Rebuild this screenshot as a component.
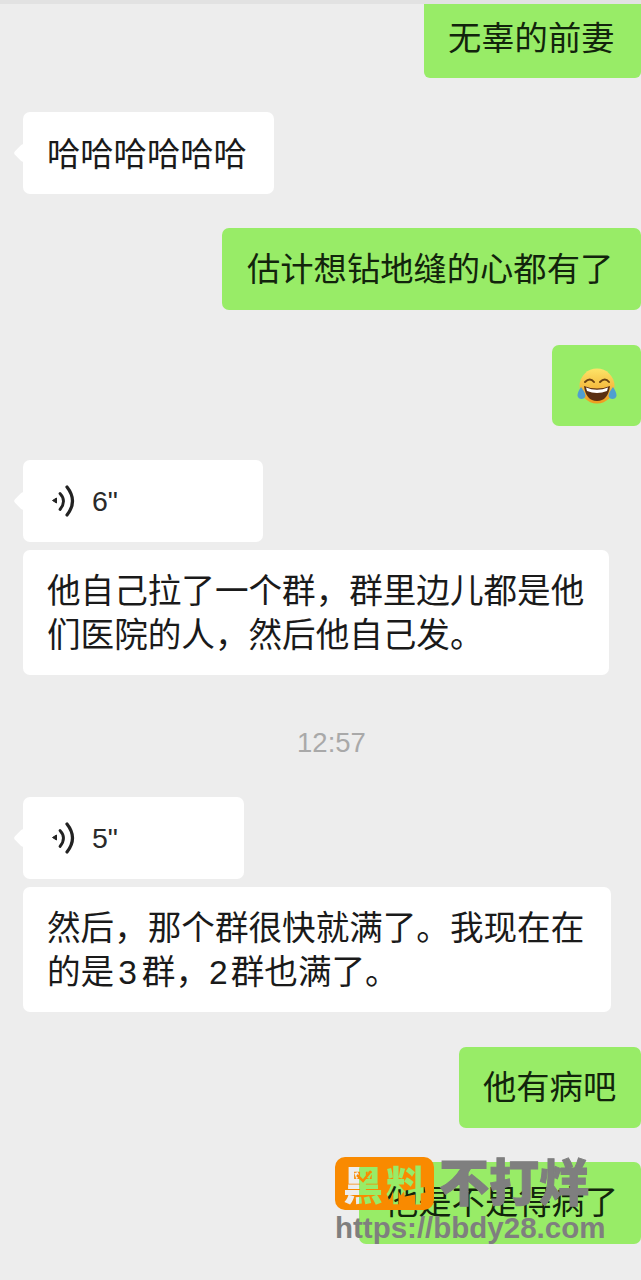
<div class="chat">
	<div class="row me first"><div class="bubble green b1">无辜的前妻</div></div>
	<div class="row other haha"><div class="bubble white tail b2">哈哈哈哈哈哈</div></div>
	<div class="row me guess"><div class="bubble green b3">估计想钻地缝的心都有了</div></div>
	<div class="row me emoji-row">
		<div class="bubble green emoji">
			<svg width="42" height="40" viewBox="0 0 42 40" aria-hidden="true">
				<defs>
					<linearGradient id="skin" x1="0" y1="0" x2="0" y2="1">
						<stop offset="0" stop-color="#fde468" />
						<stop offset="1" stop-color="#ee9a1e" />
					</linearGradient>
				</defs>
				<circle cx="21" cy="20" r="17.5" fill="url(#skin)" />
				<path d="M9 16 q5 -5 9 0 M24 16 q5 -5 9 0" fill="none" stroke="#6b4312" stroke-width="2" stroke-linecap="round" />
				<path d="M8 20 Q21 25 34 20 Q32 35 21 35 Q10 35 8 20 Z" fill="#5a2f12" />
				<path d="M10 21.5 Q21 26 32 21.5 L31 25 Q21 29 11 25 Z" fill="#fff" />
				<path d="M5 21 Q1 27 1.5 30 a4.2 4.2 0 0 0 8 0 Q9 26 5 21 Z" fill="#4f9fd0" />
				<path d="M37 21 Q41 27 40.5 30 a4.2 4.2 0 0 1 -8 0 Q33 26 37 21 Z" fill="#4f9fd0" />
			</svg>
		</div>
	</div>
	<div class="row other voice-six"><div class="bubble white tail voice v6">
		<svg width="25" height="32" viewBox="0 0 25 32" aria-hidden="true">
			<path d="M2.5 15.5 L6.5 13 V18 Z" fill="#222" stroke="#222" stroke-linejoin="round" />
			<path d="M10 8.5 Q17 16 10 24.5" fill="none" stroke="#222" stroke-width="2.8" stroke-linecap="round" />
			<path d="M17 2 Q28 16 17 30" fill="none" stroke="#222" stroke-width="3.2" stroke-linecap="round" />
		</svg>
		<span class="secs">6"</span>
	</div></div>
	<div class="row other stacked"><div class="bubble white long l1">他自己拉了一个群，群里边儿都是他们医院的人，然后他自己发。</div></div>
	<div class="time">12:57</div>
	<div class="row other voice-five"><div class="bubble white tail voice v5">
		<svg width="25" height="32" viewBox="0 0 25 32" aria-hidden="true">
			<path d="M2.5 15.5 L6.5 13 V18 Z" fill="#222" stroke="#222" stroke-linejoin="round" />
			<path d="M10 8.5 Q17 16 10 24.5" fill="none" stroke="#222" stroke-width="2.8" stroke-linecap="round" />
			<path d="M17 2 Q28 16 17 30" fill="none" stroke="#222" stroke-width="3.2" stroke-linecap="round" />
		</svg>
		<span class="secs">5"</span>
	</div></div>
	<div class="row other stacked"><div class="bubble white long l2">然后，那个群很快就满了。我现在在的是<span class="three">3</span>群，<span class="two">2</span>群也满了。</div></div>
	<div class="row me sick"><div class="bubble green b4">他有病吧</div></div>
	<div class="row me last"><div class="bubble green b5">他是不是得病了</div></div>

	<div class="mark">
		<div class="mark-top">
			<svg class="badge" width="99" height="53" viewBox="0 0 99 53" role="img">
				<mask id="cut">
					<rect width="99" height="53" fill="#fff" />
					<text class="badge-text" x="8" y="43" fill="#000">黑</text>
					<text class="badge-text" x="51" y="43" fill="#000">料</text>
				</mask>
				<rect width="99" height="53" rx="10" fill="#f98a00" mask="url(#cut)" />
				<path d="M22 18 L28 24 L36 14" fill="none" stroke="#f98a00" stroke-width="2.5" />
			</svg>
			<span class="slogan">不打烊</span>
		</div>
		<div class="url">https://bbdy28.com</div>
	</div>
</div>

<style>
	:global(body) {
		margin: 0;
		background: #ededed;
	}

	.chat {
		position: relative;
		width: 641px;
		height: 1280px;
		overflow: hidden;
		box-sizing: border-box;
		background: #ededed;
		border-top: 4px solid #e2e2e2;
		font-family: "Liberation Sans", "Noto Sans CJK SC", sans-serif;
		color: #1a1a1a;
	}

	.row {
		display: flex;
	}

	.me {
		justify-content: flex-end;
	}

	.other {
		padding-left: 23px;
	}

	.bubble {
		position: relative;
		box-sizing: border-box;
		border-radius: 7px;
		font-size: 33.3px;
		line-height: 44px;
		padding: 0 24px;
		height: 81px;
		display: flex;
		align-items: center;
		white-space: nowrap;
	}

	.green {
		background: #98ec67;
		color: #12240c;
	}

	.white {
		background: #fff;
	}

	.tail::before {
		content: "";
		position: absolute;
		left: -7px;
		top: 50%;
		width: 14px;
		height: 14px;
		margin-top: -7px;
		background: #fff;
		border-radius: 3px;
		transform: rotate(45deg);
	}

	.b1 {
		height: 74px;
		width: 217px;
		padding-bottom: 4px;
		border-radius: 0 0 6px 6px;
	}

	.haha {
		margin-top: 34px;
	}

	.b2 {
		width: 251px;
		height: 82px;
		padding-top: 4px;
	}

	.guess {
		margin-top: 34px;
	}

	.b3 {
		width: 419px;
		height: 82px;
		padding-top: 2px;
		padding-left: 25px;
	}

	.emoji-row {
		margin-top: 35px;
	}

	.emoji {
		width: 89px;
		padding: 0 0 0 24px;
	}

	.voice-six {
		margin-top: 34px;
	}

	.voice {
		padding: 0 0 0 27px;
		gap: 17px;
		height: 82px;
	}

	.v6 {
		width: 240px;
	}

	.v5 {
		width: 221px;
	}

	.secs {
		font-size: 28.5px;
		color: #2a2a2a;
	}

	.stacked {
		margin-top: 8px;
	}

	.long {
		height: auto;
		display: block;
		padding: 20px 24px 17px 24px;
		font-size: 33.6px;
		line-height: 44px;
		white-space: normal;
	}

	.l1 {
		width: 586px;
	}

	.l2 {
		width: 588px;
	}

	.three {
		margin: 0 5px 0 4px;
	}

	.two {
		margin-right: 3px;
	}

	.time {
		margin-top: 45px;
		margin-left: 22px;
		text-align: center;
		font-size: 27.5px;
		line-height: 46px;
		color: #a9a9a9;
	}

	.voice-five {
		margin-top: 31px;
	}

	.sick {
		margin-top: 35px;
	}

	.b4 {
		width: 182px;
	}

	.last {
		margin-top: 34px;
	}

	.b5 {
		width: 282px;
		height: 82px;
		padding-left: 26px;
	}

	.mark {
		position: absolute;
		left: 335px;
		top: 1153px;
		width: 300px;
	}

	.mark-top {
		display: flex;
		align-items: center;
		gap: 5px;
	}

	.badge {
		flex: none;
		display: block;
	}

	.badge-text {
		font-size: 40px;
		font-weight: 900;
		font-family: "Noto Sans CJK SC", sans-serif;
	}

	.slogan {
		font-size: 50px;
		line-height: 50px;
		font-weight: 900;
		color: #7f7f7f;
		white-space: nowrap;
		-webkit-text-stroke: 1px #7f7f7f;
	}

	.url {
		margin-top: 1px;
		font-size: 29.5px;
		line-height: 34px;
		font-weight: 700;
		color: #7f7f7f;
		white-space: nowrap;
	}
</style>
